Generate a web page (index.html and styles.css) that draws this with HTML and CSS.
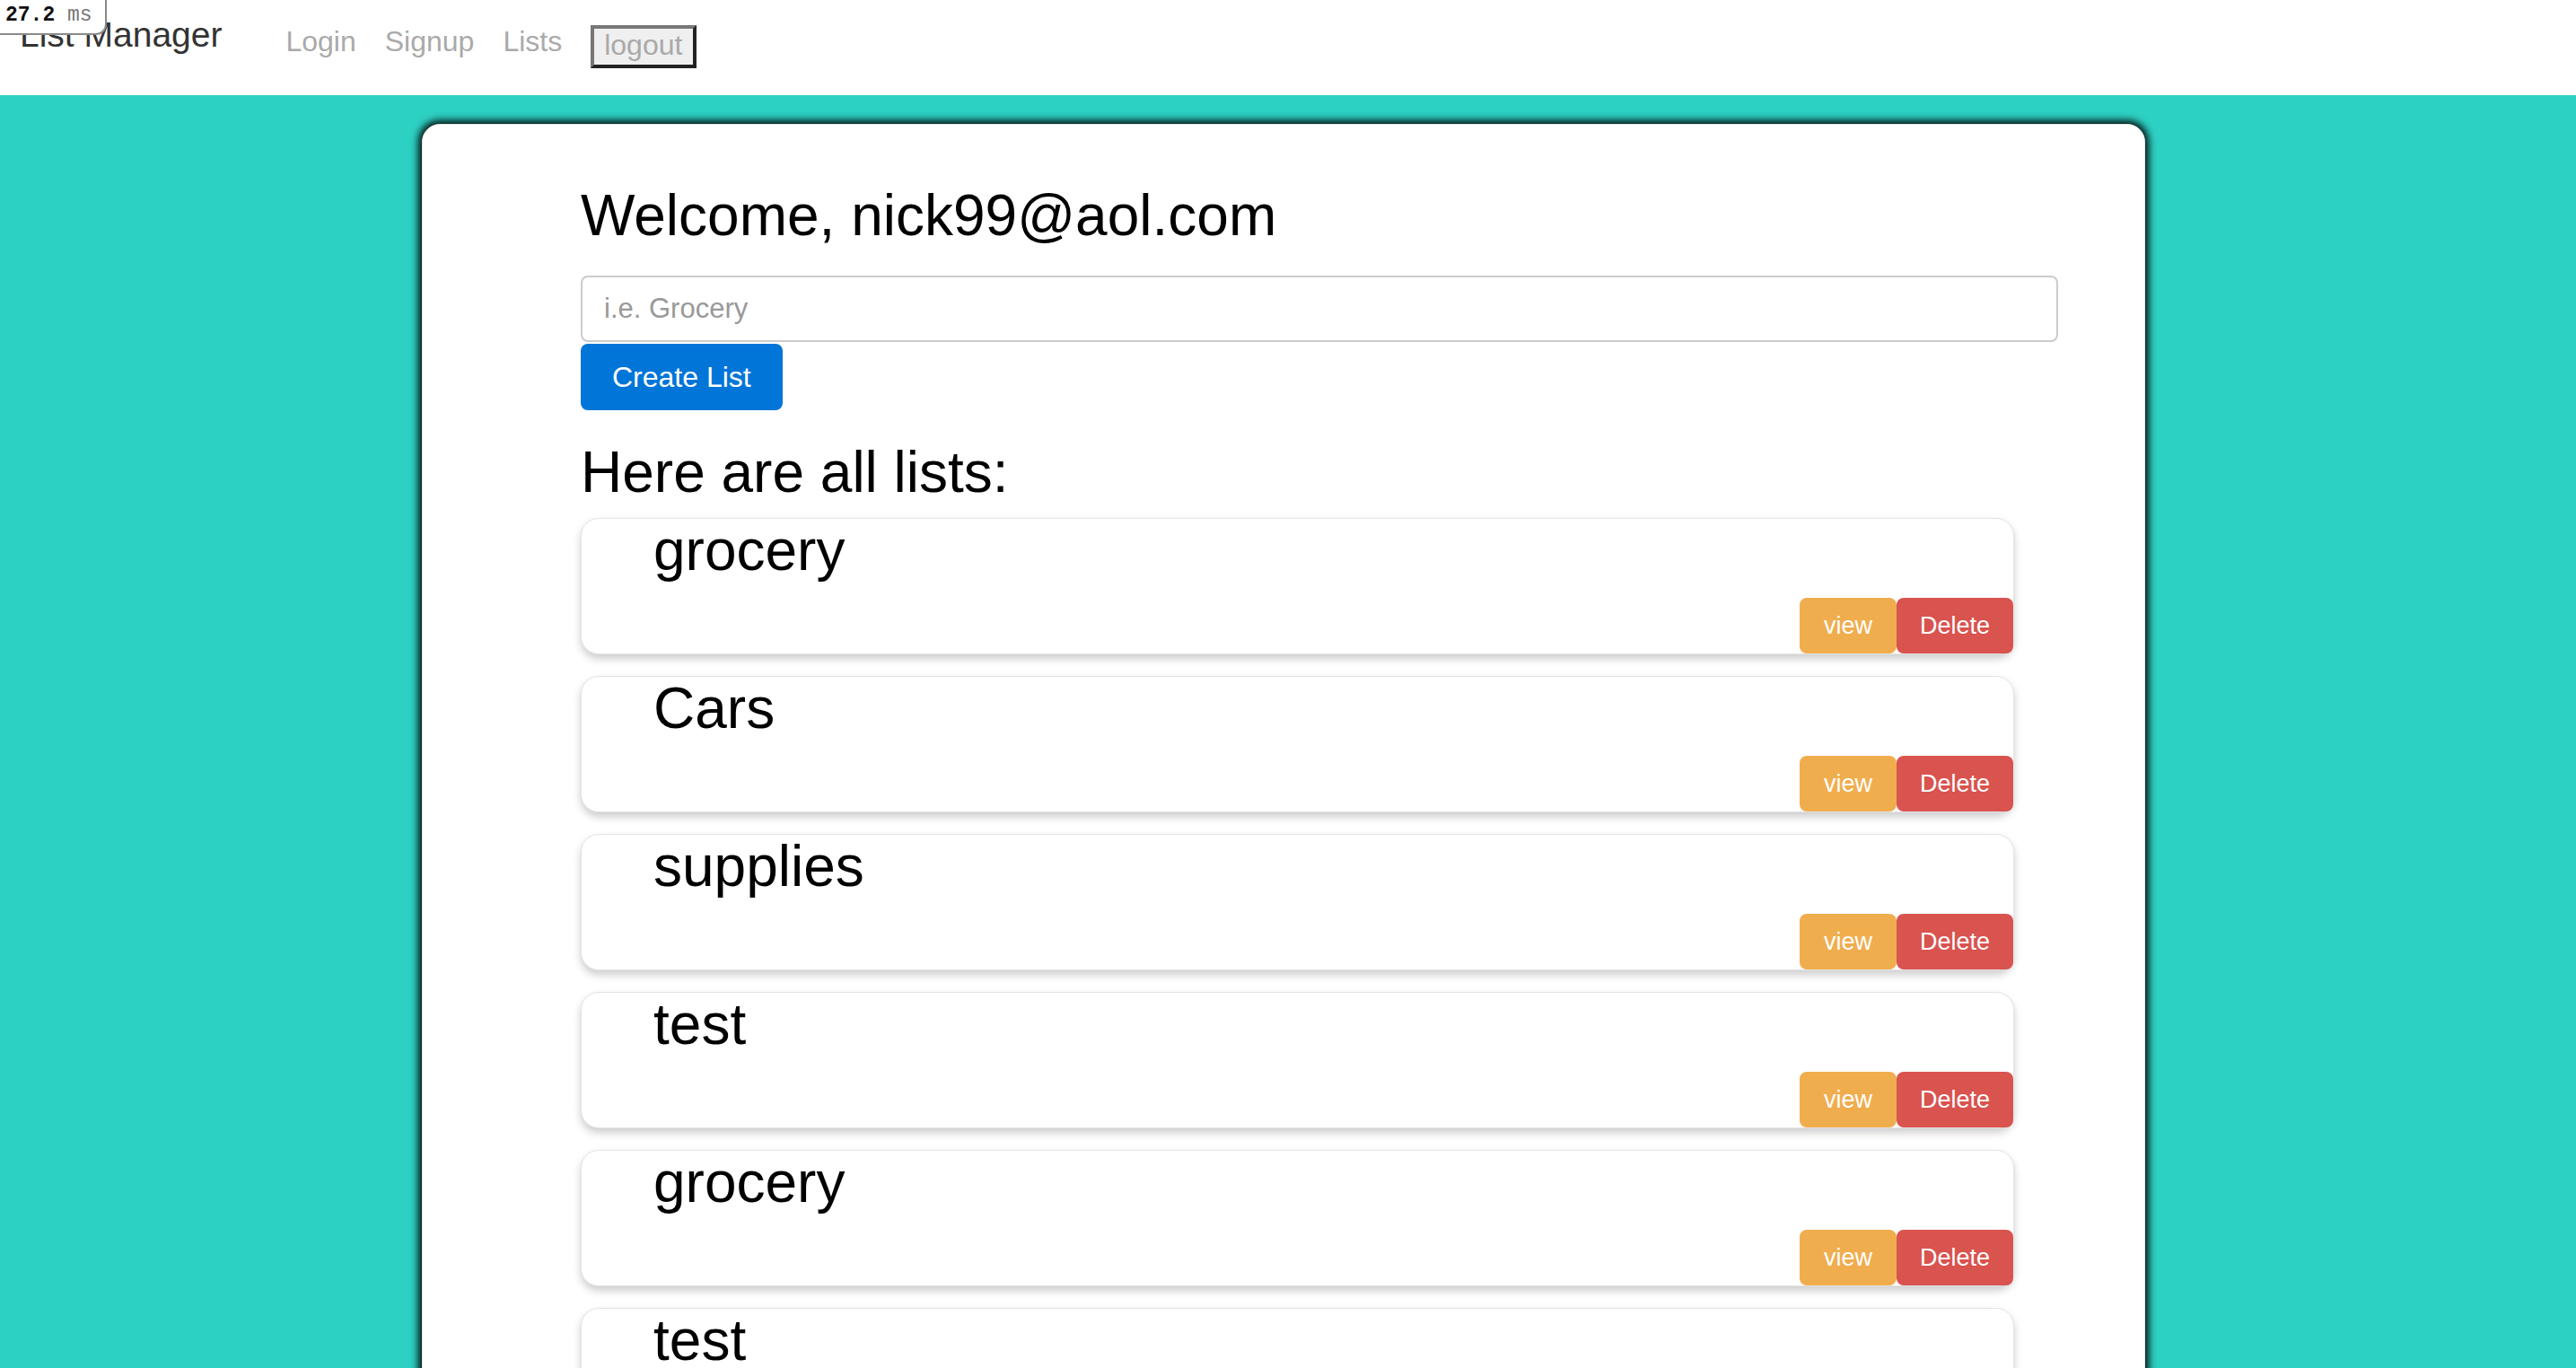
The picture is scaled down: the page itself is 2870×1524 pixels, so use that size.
FILE: index.html
```html
<!DOCTYPE html>
<html lang="en">
<head>
<meta charset="utf-8">
<title>List Manager</title>
<link rel="stylesheet" href="styles.css">
</head>
<body>
<div class="timer"><b>27.2</b> <span class="unit">ms</span></div>
<nav class="navbar">
  <a class="brand" href="#">List Manager</a>
  <a class="nav-link" href="#">Login</a>
  <a class="nav-link" href="#">Signup</a>
  <a class="nav-link" href="#">Lists</a>
  <button class="logout" type="button">logout</button>
</nav>
<main class="page">
  <section class="card">
    <h1 class="title">Welcome, nick99@aol.com</h1>
    <input class="list-input" type="text" placeholder="i.e. Grocery">
    <button class="btn-create" type="button">Create List</button>
    <h1 class="title lists-title">Here are all lists:</h1>
    <div class="lists">
      <div class="list-item">
        <h2 class="item-name">grocery</h2>
        <div class="item-actions"><button class="btn btn-view">view</button><button class="btn btn-delete">Delete</button></div>
      </div>
      <div class="list-item">
        <h2 class="item-name">Cars</h2>
        <div class="item-actions"><button class="btn btn-view">view</button><button class="btn btn-delete">Delete</button></div>
      </div>
      <div class="list-item">
        <h2 class="item-name">supplies</h2>
        <div class="item-actions"><button class="btn btn-view">view</button><button class="btn btn-delete">Delete</button></div>
      </div>
      <div class="list-item">
        <h2 class="item-name">test</h2>
        <div class="item-actions"><button class="btn btn-view">view</button><button class="btn btn-delete">Delete</button></div>
      </div>
      <div class="list-item">
        <h2 class="item-name">grocery</h2>
        <div class="item-actions"><button class="btn btn-view">view</button><button class="btn btn-delete">Delete</button></div>
      </div>
      <div class="list-item">
        <h2 class="item-name">test</h2>
        <div class="item-actions"><button class="btn btn-view">view</button><button class="btn btn-delete">Delete</button></div>
      </div>
    </div>
  </section>
</main>
</body>
</html>
```
FILE: styles.css
```css
html, body {
  height: 100%;
  overflow: hidden;
}
body {
  margin: 0;
  background: #2dd1c4;
  font-family: "Liberation Sans", Arial, Helvetica, sans-serif;
  color: #000;
}

.timer {
  position: absolute;
  left: 0;
  top: 0;
  z-index: 10;
  box-sizing: border-box;
  width: 119px;
  height: 39px;
  padding: 4px 0 0 6px;
  background: #fff;
  border-right: 2px solid #8a8a8a;
  border-bottom: 2px solid #8a8a8a;
  border-bottom-right-radius: 12px;
  font-family: "Liberation Mono", "Courier New", monospace;
  font-size: 23px;
  line-height: 26px;
  color: #111;
  white-space: nowrap;
}
.timer b { font-weight: bold; }
.timer .unit { color: #777; }

.navbar {
  height: 106px;
  background: #fff;
  display: flex;
  align-items: flex-start;
  padding-left: 22px;
  box-sizing: border-box;
}
.brand {
  margin-top: 17px;
  margin-right: 71px;
  font-size: 39px;
  color: #333;
  text-decoration: none;
}
.nav-link {
  margin-top: 28px;
  margin-right: 32px;
  font-size: 32px;
  color: #aaa;
  text-decoration: none;
}
.logout {
  margin-top: 28px;
  height: 48px;
  box-sizing: border-box;
  padding: 0 12px 3px 11px;
  border-width: 4px;
  border-style: solid;
  border-color: #777 #222 #222 #777;
  background: #efefef;
  font-family: "Liberation Sans", Arial, sans-serif;
  font-size: 32px;
  line-height: 37px;
  color: #a9a9a9;
}

.page {
  padding: 32px 10px 0 0;
}
.card {
  width: 1920px;
  box-sizing: border-box;
  margin: 0 auto;
  min-height: 1600px;
  background: #fff;
  border: 1px solid #e8e8e8;
  border-radius: 20px;
  box-shadow: 0 0 8px 4px rgba(0, 0, 0, 0.92);
  padding: 64px 96px 40px 176px;
}

.title {
  margin: 0 0 30px;
  font-size: 64px;
  font-weight: normal;
  line-height: normal;
}
.lists-title {
  margin: 32px 0 14px;
}

.list-input {
  display: block;
  width: 100%;
  height: 74px;
  box-sizing: border-box;
  margin: 0 0 2px;
  padding: 0 24px;
  border: 2px solid #ccc;
  border-radius: 8px;
  font-family: "Liberation Sans", Arial, sans-serif;
  font-size: 31px;
  color: #333;
  outline: none;
}
.list-input::placeholder { color: #999; }

.btn-create {
  display: block;
  height: 74px;
  padding: 0 35px;
  border: none;
  border-radius: 8px;
  background: #0275d8;
  color: #fff;
  font-family: "Liberation Sans", Arial, sans-serif;
  font-size: 32px;
  line-height: 74px;
}

.lists {
  display: flex;
  flex-direction: column;
  gap: 24px;
}
.list-item {
  width: 1597px;
  box-sizing: border-box;
  background: #fff;
  border: 1px solid #e4e4e4;
  border-radius: 20px;
  box-shadow: 0 5px 10px rgba(0, 0, 0, 0.2);
  display: flex;
  flex-direction: column;
}
.item-name {
  margin: 0;
  padding-left: 80px;
  font-size: 64px;
  font-weight: normal;
  line-height: 70px;
}
.item-actions {
  margin-top: 18px;
  display: flex;
  justify-content: flex-end;
}
.btn {
  height: 62px;
  padding: 0 27px;
  border: none;
  border-radius: 8px;
  color: #fff;
  font-family: "Liberation Sans", Arial, sans-serif;
  font-size: 27px;
  line-height: 62px;
}
.btn-view { background: #f0ad4e; }
.btn-delete { background: #d9534f; padding: 0 26px; }
```
